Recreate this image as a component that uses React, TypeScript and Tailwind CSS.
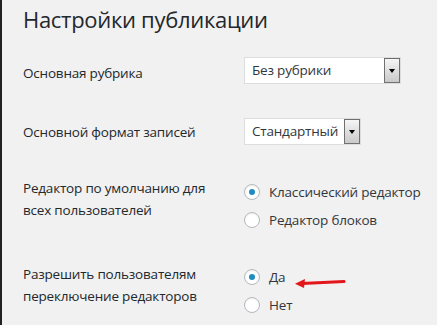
import type { ReactNode } from 'react';

const font = { fontFamily: '"Open Sans", "Noto Sans", sans-serif' };

function FakeSelect({ value, width }: { value: string; width: string }) {
  return (
    <div className={`flex h-[27px] ${width} items-stretch border border-[#dddddd] bg-white`}>
      <span className='flex-1 truncate pl-[7px] text-[13.5px] leading-[25px] tracking-[-0.2px] text-[#32373c]'>{value}</span>
      <span className='flex w-[16px] items-center justify-center border border-[#707070] bg-gradient-to-b from-[#f6f6f6] to-[#c9c9c9]'>
        <span className='h-0 w-0 border-x-[3.5px] border-t-[4px] border-x-transparent border-t-black' />
      </span>
    </div>
  );
}

function Radio({ checked, label, children }: { checked?: boolean; label: string; children?: ReactNode }) {
  return (
    <div className='flex h-[28px] items-center'>
      <span className='flex h-[16px] w-[16px] items-center justify-center rounded-full border border-[#b4b9be] bg-white shadow-[inset_0_1px_2px_rgba(0,0,0,0.07)]'>
        {checked && <span className='h-[6px] w-[6px] rounded-full bg-[#1e8cbe]' />}
      </span>
      <span className='ml-[9px] text-[13.5px] tracking-[-0.2px] text-[#32373c]'>{label}</span>
      {children}
    </div>
  );
}

function Row({ label, children, className }: { label: ReactNode; children: ReactNode; className: string }) {
  return (
    <div className={`flex ${className}`}>
      <div className='w-[221px] pr-[10px] text-[13.5px] leading-[22px] tracking-[-0.2px] text-[#23282d]'>{label}</div>
      <div>{children}</div>
    </div>
  );
}

export default function App() {
  return (
    <div style={font} className='h-[325px] w-[437px] overflow-hidden border-l-2 border-l-[#222222] bg-[#f1f1f1] pl-[21px]'>
      <h1 className='pt-[5px] text-[22px] font-normal leading-[29px] tracking-[-0.3px] text-[#23282d]'>Настройки публикации</h1>

      <Row className='mt-[23px]' label={<div className='pt-[5px]'>Основная рубрика</div>}>
        <FakeSelect value='Без рубрики' width='w-[157px]' />
      </Row>

      <Row className='mt-[34px]' label={<div className='pt-[3px]'>Основной формат записей</div>}>
        <FakeSelect value='Стандартный' width='w-[117px]' />
      </Row>

      <Row
        className='mt-[32px]'
        label={
          <div>
            Редактор по умолчанию для
            <br />
            всех пользователей
          </div>
        }
      >
        <div className='mt-[1px]'>
          <Radio checked label='Классический редактор' />
          <Radio label='Редактор блоков' />
        </div>
      </Row>

      <Row
        className='mt-[29px]'
        label={
          <div>
            Разрешить пользователям
            <br />
            переключение редакторов
          </div>
        }
      >
        <div className='mt-[0px]'>
          <Radio checked label='Да'>
            <svg width='52' height='12' viewBox='0 0 52 12' className='ml-[9px] mt-[12px]'>
              <path d='M8 6.5 L50 4.5' stroke='#e3161c' strokeWidth='3' strokeLinecap='round' />
              <path d='M1 6.8 L11 2 L10 11 Z' fill='#e3161c' />
            </svg>
          </Radio>
          <Radio label='Нет' />
        </div>
      </Row>
    </div>
  );
}
